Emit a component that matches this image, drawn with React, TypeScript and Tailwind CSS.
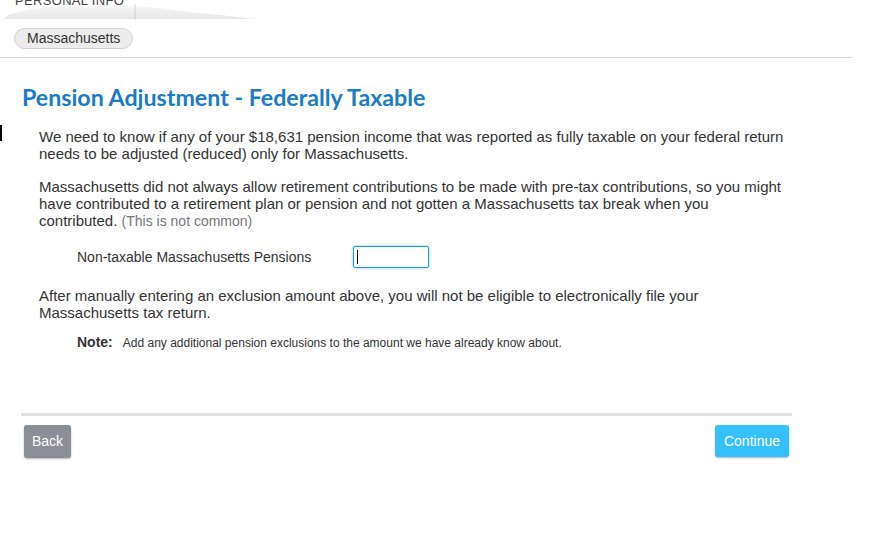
import React from 'react';

const TopTab = () => {
  return <div className="relative h-[20px] w-[260px] overflow-hidden">
      <svg width="260" height="20" className="absolute left-0 top-0">
        <defs>
          <linearGradient id="tabg" x1="0" y1="0" x2="0" y2="1">
            <stop offset="0" stopColor="#f7f7f7" />
            <stop offset="1" stopColor="#e6e6e6" />
          </linearGradient>
        </defs>
        <polygon points="3,19 10,14 30,9 60,6 135,6 160,8 190,12 220,15 255,19" fill="url(#tabg)" />
        <line x1="135" y1="4" x2="135" y2="20" stroke="#d0d0d0" strokeWidth="1" />
      </svg>
      <span className="absolute left-[15px] top-[-9px] font-['Liberation_Sans',sans-serif] text-[13px] tracking-wide text-[#444]">PERSONAL INFO</span>
    </div>;
};

export default function App() {
  return <div className="relative min-h-[540px] w-[874px] bg-white font-['Liberation_Sans',Arial,sans-serif] text-[#333]">
      <TopTab />
      <div className="flex w-[852px] border-b border-[#d6d6d6] pb-[8px] pl-[14px] pt-[8px]">
        <span className="flex h-[21px] items-center rounded-full border border-[#cfcfcf] bg-[#ececec] px-[12px] text-[14px] text-[#333]">Massachusetts</span>
      </div>

      <div className="absolute left-0 top-[125px] h-[16px] w-[2px] bg-black" />

      <div className="ml-[21px] w-[771px]">
        <h1 className="mt-[25px] pl-[1px] font-['Lato',sans-serif] text-[23.2px] font-bold leading-[28px] text-[#1b7bc4]">Pension Adjustment - Federally Taxable</h1>

        <div className="mt-[17px] pl-[18px] pr-[4px] text-[15px] leading-[17px]">
          <p>We need to know if any of your $18,631 pension income that was reported as fully taxable on your federal return needs to be adjusted (reduced) only for Massachusetts.</p>
          <p className="mt-[16px]">Massachusetts did not always allow retirement contributions to be made with pre-tax contributions, so you might have contributed to a retirement plan or pension and not gotten a Massachusetts tax break when you contributed. <span className="text-[14px] text-[#777]">(This is not common)</span></p>

          <div className="mt-[16px] flex items-center pl-[38px]">
            <span className="w-[276px] text-[14px]">Non-taxable Massachusetts Pensions</span>
            <div className="flex h-[22px] w-[76px] items-center rounded-[2px] border border-[#1e9be0] pl-[3px] shadow-[0_0_3px_rgba(30,155,224,0.6)]">
              <div className="h-[14px] w-[1px] bg-black" />
            </div>
          </div>

          <p className="mt-[19px]">After manually entering an exclusion amount above, you will not be eligible to electronically file your Massachusetts tax return.</p>

          <div className="mt-[13px] flex items-baseline pl-[38px]">
            <span className="text-[14px] font-bold">Note:</span>
            <span className="ml-[10px] text-[12px]">Add any additional pension exclusions to the amount we have already know about.</span>
          </div>
        </div>

        <div className="mt-[61px] h-[3px] bg-[#e0e0e0]" />

        <div className="mt-[9px] flex justify-between pl-[3px] pr-[3px]">
          <button className="h-[33px] w-[47px] rounded-[3px] bg-[#8b8e97] text-[14px] text-white shadow-[0_1px_2px_rgba(0,0,0,0.3)]">Back</button>
          <button className="h-[32px] w-[74px] rounded-[3px] bg-[#35c0fb] text-[14px] text-white shadow-[0_1px_2px_rgba(0,0,0,0.3)]">Continue</button>
        </div>
      </div>
    </div>;
}
